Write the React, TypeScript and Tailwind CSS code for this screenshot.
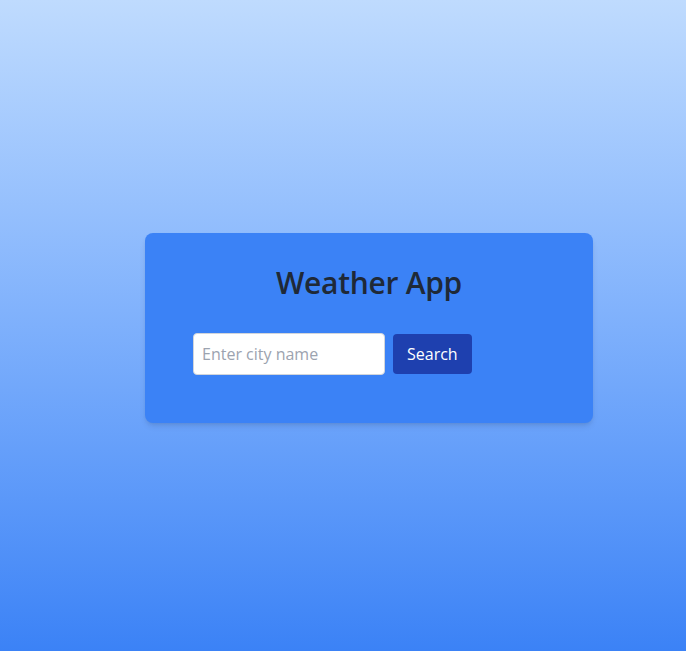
import { useState } from "react";

export default function App() {
  const [city, setCity] = useState("");

  return (
    <div
      className="min-h-screen flex items-center justify-center pl-[52px] pt-[4px] bg-gradient-to-b from-[#bfdbfe] to-[#3b82f6]"
      style={{ fontFamily: '"Open Sans", "Noto Sans", sans-serif' }}
    >
      <div className="w-[448px] bg-[#3b82f6] rounded-lg shadow-md p-8">
        <h1 className="text-3xl font-semibold text-[#1f2937] text-center mb-4 tracking-[-0.01em]">Weather App</h1>
        <form className="p-4 flex items-center" onSubmit={(e) => e.preventDefault()}>
          <input
            type="text"
            value={city}
            onChange={(e) => setCity(e.target.value)}
            placeholder="Enter city name"
            className="w-48 px-2 py-2 bg-white border border-[#d1d5db] rounded text-base text-[#1f2937] placeholder:text-[#9ca3af] outline-none"
          />
          <button type="submit" className="ml-2 px-[14px] py-2 bg-[#1e40af] text-white rounded text-base">
            Search
          </button>
        </form>
      </div>
    </div>
  );
}
